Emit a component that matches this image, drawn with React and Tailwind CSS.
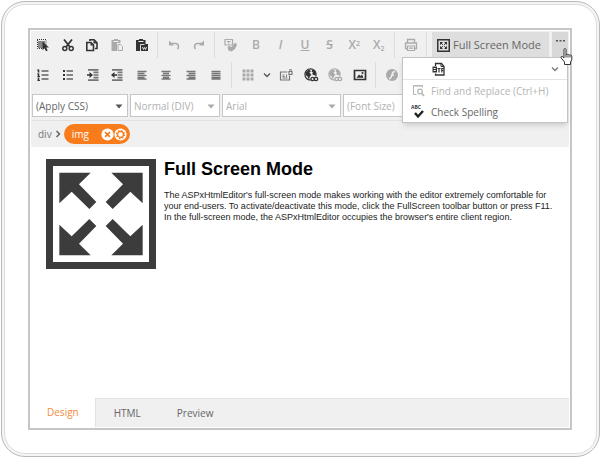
import clsx from 'clsx';

const Icon = ({ children, size = 'size-4', ...rest }) => (
  <svg viewBox="0 0 16 16" className={clsx('block shrink-0', size)} fill="currentColor" aria-hidden="true" {...rest}>
    {children}
  </svg>
);

const stroke = { fill: 'none', stroke: 'currentColor' };

const Arrows = () => (
  <>
    <path d="M40 41H134L99 76L151 129L130 150L77 98L40 133Z" />
    <path d="M290 41H196L231 76L179 129L200 150L253 98L290 133Z" />
    <path d="M40 289H134L99 254L151 201L130 180L77 232L40 197Z" />
    <path d="M290 289H196L231 254L179 201L200 180L253 232L290 197Z" />
  </>
);

const FullScreenGlyph = ({ className }) => (
  <svg viewBox="0 0 330 330" className={className} fill="currentColor" aria-hidden="true">
    <path fillRule="evenodd" d="M0 0H330V330H0ZM21 21V309H309V21Z" />
    <Arrows />
  </svg>
);

// toolbar version, heavier frame so it reads at 13px
const FullScreenIcon = () => (
  <svg viewBox="0 0 13 13" className="size-[13px] shrink-0 text-[#333]" fill="currentColor" aria-hidden="true">
    <path d="M.75.75h11.500v11.500H.75z" fill="none" stroke="currentColor" strokeWidth="1.500" />
    <path d="M3 3h3L3 6zM10 3v3L7 3zM3 10V7l3 3zM10 10H7l3-3z" />
    <path d="M3.500 3.500l2.300 2.300M9.500 3.500L7.200 5.800M3.500 9.500l2.300-2.300M9.500 9.500L7.200 7.200" stroke="currentColor" />
  </svg>
);

const Globe = () => (
  <>
    <circle cx="7.500" cy="7.500" r="5.600" {...stroke} strokeWidth="1.200" />
    <path d="M2.500 5.500L6 2.500l2 1.500-1.500 1.500L8.500 8l-1.500 1L6 12.500 4.500 9.500 2.500 8zM9.500 2.500l3 2 .5 3-1.500 1-2.500-1.500 1-1.500-1.500-1z" />
    <path d="M7.500 9.500H15V15H7.500z" fill="#f0f0f0" />
    <circle cx="9.600" cy="12" r="1.700" {...stroke} strokeWidth="1.300" />
    <circle cx="13" cy="12" r="1.700" {...stroke} strokeWidth="1.300" />
  </>
);

const textTool = 'text-[12px] leading-none font-semibold';

const icons = {
  select: (
    <Icon>
      <path d="M3 4h7v5l-2-1.500V11H3z" opacity=".55" />
      <path d="M2 2.500h9V9" {...stroke} strokeDasharray="1 1" />
      <path d="M2.500 3v8.500H8" {...stroke} strokeDasharray="1 1" />
      <path d="M7.500 4.500l6.500 6h-2.800l1.500 3-1.700.8-1.500-3-2 1.900z" />
    </Icon>
  ),
  cut: (
    <Icon>
      <circle cx="4.800" cy="11.500" r="2" {...stroke} strokeWidth="1.500" />
      <circle cx="11.200" cy="11.500" r="2" {...stroke} strokeWidth="1.500" />
      <path d="M4 2.500l6.200 7.700M12 2.500L5.800 10.200" {...stroke} strokeWidth="1.800" />
    </Icon>
  ),
  copy: (
    <Icon>
      <path d="M2.800 5.500h4.200l2.500 2.500v5.500H2.800z" {...stroke} strokeWidth="1.600" />
      <path d="M6 4V2.800h4l3 3v5.700h-2" {...stroke} strokeWidth="1.600" />
      <path d="M6.500 5.500l3 3h-3zM9.500 3l3.500 3.500H9.500z" />
    </Icon>
  ),
  paste: (
    <Icon>
      <path d="M2.500 3H5V2h4v1h2.500v3H8v8H2.500z" />
      <path d="M4.500 4.500h5" stroke="#f0f0f0" strokeWidth="1" />
      <path d="M9 7.500h2.500l2 2v4H9z" {...stroke} />
    </Icon>
  ),
  pasteWord: (
    <Icon>
      <path d="M2 3H5V2h4v1h2.500v4H14v7H2z" />
      <path d="M4.500 4.500h5" stroke="#f0f0f0" />
      <path d="M6.500 14V7.500h4M8.500 10l1 2.500 1-2 1 2 1-2.500" fill="none" stroke="#f0f0f0" strokeWidth=".9" />
    </Icon>
  ),
  undo: (
    <Icon>
      <path d="M4 6.500h5.500a3 3 0 0 1 3 3c0 1-.4 1.700-1 2.500" {...stroke} strokeWidth="1.500" />
      <path d="M3 3.500v5h5z" />
    </Icon>
  ),
  redo: (
    <Icon>
      <path d="M12 6.500H6.500a3 3 0 0 0-3 3c0 1 .4 1.700 1 2.500" {...stroke} strokeWidth="1.500" />
      <path d="M13 3.500v5H8z" />
    </Icon>
  ),
  clearFormat: (
    <Icon>
      <path d="M2 2.500h7.500v5.500H2z" {...stroke} strokeWidth="1.200" />
      <path d="M4 4.500h3.500M5.800 4.500V7" {...stroke} />
      <path d="M4.500 10l2-1 2 1L12 5.500l2 2-2 4.500-3.500 2.500-3-1z" />
    </Icon>
  ),
  bold: <span className={textTool}>B</span>,
  italic: <span className={clsx(textTool, 'italic')}>I</span>,
  underline: <span className={clsx(textTool, 'underline')}>U</span>,
  strike: <span className={clsx(textTool, 'line-through')}>S</span>,
  sup: <span className={textTool}>X<sup className="text-[7px]">2</sup></span>,
  sub: <span className={textTool}>X<sub className="text-[7px]">2</sub></span>,
  print: (
    <Icon>
      <path d="M4.500 6V2.500h7V6M4.500 11.500h-2V6h11v5.500h-2" {...stroke} strokeWidth="1.300" />
      <path d="M4.500 9h7v4.500h-7zM6 11.200h4" {...stroke} strokeWidth="1.200" />
    </Icon>
  ),
  ordered: (
    <Icon>
      <path d="M3.500 2.500v3M3.500 6.500v3M3.500 10.500v3" {...stroke} strokeWidth="1.600" />
      <path d="M2.500 3h1M2.500 9.500h2.500M2.500 13.500H5M2.500 6.700h1" {...stroke} />
      <path d="M6.500 4h7M6.500 8h7M6.500 12h7" {...stroke} strokeWidth="1.300" opacity=".75" />
    </Icon>
  ),
  bullets: (
    <Icon>
      <path d="M3 3h2v2H3zM3 7h2v2H3zM3 11h2v2H3z" />
      <path d="M6.500 4h6.500M6.500 8h6.500M6.500 12h6.500" {...stroke} strokeWidth="1.300" opacity=".75" />
    </Icon>
  ),
  indent: (
    <Icon>
      <path d="M3 2.800h10.500M8.500 5.400h5M8.500 8h5M8.500 10.600h5M3 13.200h10.500" {...stroke} strokeWidth="1.700" opacity=".65" />
      <path d="M2 7.200h2.500V5L8 8l-3.500 3V8.800H2z" />
    </Icon>
  ),
  outdent: (
    <Icon>
      <path d="M3 2.800h10.500M8.500 5.400h5M8.500 8h5M8.500 10.600h5M3 13.200h10.500" {...stroke} strokeWidth="1.700" opacity=".65" />
      <path d="M8 7.200H5.500V5L2 8l3.500 3V8.800H8z" />
    </Icon>
  ),
  left: <Icon><path d="M3.500 4.500h9M3.500 6.500h7M3.500 8.500h9M3.500 10.500h7M3.500 12h9" {...stroke} strokeWidth="1.500" /></Icon>,
  center: <Icon><path d="M3.500 4.500h9M5 6.500h6M3.500 8.500h9M5 10.500h6M3.500 12h9" {...stroke} strokeWidth="1.500" /></Icon>,
  right: <Icon><path d="M3.500 4.500h9M5.500 6.500h7M3.500 8.500h9M5.500 10.500h7M3.500 12h9" {...stroke} strokeWidth="1.500" /></Icon>,
  justify: <Icon><path d="M3.500 4.500h9M3.500 6.500h9M3.500 8.500h9M3.500 10.500h9M3.500 12h9" {...stroke} strokeWidth="1.700" /></Icon>,
  table: (
    <Icon>
      <path d="M2.500 2.500h3v3h-3zM6.500 2.500h3v3h-3zM10.500 2.500h3v3h-3zM2.500 6.500h3v3h-3zM6.500 6.500h3v3h-3zM10.500 6.500h3v3h-3zM2.500 10.500h3v3h-3zM6.500 10.500h3v3h-3zM10.500 10.500h3v3h-3z" />
    </Icon>
  ),
  chevron: <Icon><path d="M5 6.500l3 3 3-3" {...stroke} strokeWidth="1.300" /></Icon>,
  placeholder: (
    <Icon>
      <path d="M9.500 5h-7v8h9V8.500" {...stroke} strokeWidth="1.200" />
      <path d="M4.500 8h2M4.500 9.500h2M4.500 11h5M8.500 7.500v2.500" {...stroke} />
      <path d="M11 4.500h3v3h-3z" {...stroke} strokeWidth="1.200" />
      <path d="M11.700 4.500v-2h1.600v2" {...stroke} strokeWidth=".8" />
    </Icon>
  ),
  link: <Icon><Globe /></Icon>,
  image: (
    <Icon>
      <path d="M2.500 3.500h11v9h-11z" {...stroke} strokeWidth="1.700" />
      <path d="M4.500 10.800L7 7.500l1.500 1.500L10 7.500l1.500 3.300z" /><circle cx="10.500" cy="6" r="1" />
    </Icon>
  ),
  flash: (
    <Icon>
      <circle cx="8" cy="8" r="6" />
      <path d="M11 4.500c-2.500 0-2.800 1.500-3.200 3.500S7 11.500 5 11.800M7.500 8h2.500" fill="none" stroke="#f0f0f0" strokeWidth="1.300" />
    </Icon>
  ),
  rtf: (
    <Icon>
      <path d="M4.500 5V2.500h6l2.500 3V14H4.500v-1.500" {...stroke} strokeWidth="1.300" />
      <path d="M10 2.500v3h3" {...stroke} />
      <path d="M1.500 5.500h4.500v6H1.500z" /><path d="M2.700 7.500h2M2.700 9.500h2" stroke="#fff" />
      <path d="M6.500 7.500h3M8 7.500v4M10.800 11.500v-4H13M10.800 9.500h1.700" {...stroke} strokeWidth="1.200" />
    </Icon>
  ),
  find: (
    <Icon>
      <path d="M5.500 11.500H2.500v-9h9v2M2.500 3h9" {...stroke} />
      <circle cx="9" cy="8.500" r="2.300" {...stroke} strokeWidth="1.200" />
      <path d="M10.500 10l2.500 3" {...stroke} strokeWidth="1.700" />
    </Icon>
  ),
};

const tools = {
  row1: [
    [['select', 'Select All'], ['cut', 'Cut'], ['copy', 'Copy'], ['paste', 'Paste', 1], ['pasteWord', 'Paste from Word']],
    [['undo', 'Undo', 1], ['redo', 'Redo', 1]],
    [
      ['clearFormat', 'Remove Format', 1],
      ['bold', 'Bold', 1],
      ['italic', 'Italic', 1],
      ['underline', 'Underline', 1],
      ['strike', 'Strikethrough', 1],
      ['sup', 'Superscript', 1],
      ['sub', 'Subscript', 1],
    ],
    [['print', 'Print', 1]],
  ],
  row2: [
    [
      ['ordered', 'Ordered List'],
      ['bullets', 'Bullet List'],
      ['indent', 'Indent'],
      ['outdent', 'Outdent'],
      ['left', 'Align Left', 2],
      ['center', 'Align Center', 2],
      ['right', 'Align Right', 2],
      ['justify', 'Justify', 2],
    ],
  ],
};

const tones = ['text-[#333]', 'text-[#aaa]', 'text-[#777]'];

const ToolButton = ({ item: [name, label, tone = 0] }) => (
  <button
    type="button"
    title={label}
    aria-label={label}
    className={clsx('flex min-w-0 flex-1 items-center justify-center', tones[tone])}
  >
    {icons[name]}
  </button>
);

const Group = ({ items, width }) => (
  <div className={clsx('flex shrink-0', width)}>
    {items.map((it) => <ToolButton key={it[1]} item={it} />)}
  </div>
);

const Separator = () => <div className="mr-1 ml-[3px] w-px shrink-0 bg-[#dcdcdc]" />;

const Combo = ({ label, value, width, muted }) => (
  <div className={clsx('relative h-[23px] border border-[#c6c6c6] bg-white', width)}>
    <select
      aria-label={label}
      defaultValue={value}
      disabled={muted}
      className={clsx(
        'block h-[21px] w-full appearance-none py-0 pl-[3px] text-[10px] leading-[20px] disabled:opacity-100',
        muted ? 'text-[#b0b0b0]' : 'text-[#666]'
      )}
    >
      <option>{value}</option>
    </select>
    <svg viewBox="0 0 8 5" className={clsx('pointer-events-none absolute top-[9px] right-1 h-[5px] w-2', muted ? 'text-[#aaa]' : 'text-[#555]')}>
      <path d="M0.500 0.500h7L4 4.500z" fill="currentColor" />
    </svg>
  </div>
);

const HandCursor = () => (
  <svg viewBox="0 0 14 18" className="pointer-events-none absolute top-4 left-2 z-20 h-[18px] w-3.5" aria-hidden="true">
    <path
      d="M4 1.500c0-1.300 2-1.300 2 0V7c0-1 1.900-1 1.900.2 0-1 1.900-.9 1.900.4 0-.9 2-.8 2 .5v3.600L10.500 14v2.500h-6V14L1.200 10c-.8-1.200.6-2.200 1.600-1.200L4 10z"
      fill="#fff"
      stroke="#333"
    />
    <path d="M6 7v2.500M8 7.500v2M10 8v1.500" stroke="#333" />
  </svg>
);

const MoreMenu = () => (
  <div className="absolute top-[25px] right-0 z-10 w-[166px] border border-[#c4c4c4] bg-white text-[10px] shadow-md">
    <div className="flex h-[22px] items-center justify-between border-b border-[#e4e4e4] pr-1 pl-7 text-[#333]">
      <button type="button" aria-label="Export to RTF">{icons.rtf}</button>
      <button type="button" aria-label="More export formats" className="text-[#777]">{icons.chevron}</button>
    </div>
    <button type="button" className="flex h-[22px] w-full items-center gap-1 pl-2 whitespace-nowrap text-[#b4b4b4]">
      {icons.find}
      Find and Replace (Ctrl+H)
    </button>
    <button type="button" className="flex h-5 w-full items-center gap-1 pl-2 whitespace-nowrap text-[#666]">
      <svg viewBox="0 0 16 16" className="size-4 shrink-0" aria-hidden="true">
        <text x="0" y="5" fontSize="5" fontWeight="700" fill="#333">ABC</text>
        <path d="M4 9l3 3.500 5-5.500" fill="none" stroke="#222" strokeWidth="2.400" />
      </svg>
      Check Spelling
    </button>
  </div>
);

const Toolbar = () => (
  <div className="border-b border-[#e2e2e2] pt-px pr-px pb-[3px]">
    <div className="flex h-[26px]">
      <Group items={tools.row1[0]} width="w-[123px]" />
      <Separator />
      <Group items={tools.row1[1]} width="w-[49px]" />
      <Separator />
      <Group items={tools.row1[2]} width="w-[172px]" />
      <Separator />
      <Group items={tools.row1[3]} width="w-6" />
      <Separator />
      <div className="relative ml-auto flex gap-[3px]">
        <button
          type="button"
          className="flex w-[117px] items-center gap-[3px] bg-[#dedede] pl-[5px] text-[11px] whitespace-nowrap text-[#666]"
        >
          <FullScreenIcon />
          Full Screen Mode
        </button>
        <button type="button" aria-label="More" aria-expanded="true" className="relative flex w-4 justify-center bg-[#d8d8d8] pt-2 text-[#555]">
          <svg viewBox="0 0 9 2" className="h-0.5 w-[9px]" fill="currentColor">
            <path d="M0 0h2v1.500H0zM3.500 0h2v1.500h-2zM7 0h2v1.500H7z" />
          </svg>
          <HandCursor />
        </button>
        <MoreMenu />
      </div>
    </div>
    <div className="mt-1 flex h-[26px]">
      <Group items={tools.row2[0]} width="w-[197px]" />
      <Separator />
      <Group items={[['table', 'Insert Table', 1]]} width="w-6" />
      <button type="button" aria-label="Table options" className="flex w-[14px] items-center justify-center text-[#555]">{icons.chevron}</button>
      <Group
        items={[['placeholder', 'Placeholder', 2], ['link', 'Insert Link'], ['link', 'Unlink', 1], ['image', 'Insert Image']]}
        width="w-[98px]"
      />
      <Separator />
      <Group items={[['flash', 'Insert Flash', 1]]} width="w-6" />
    </div>
    <div className="mt-[6px] flex gap-0.5 pl-px">
      <Combo label="CSS class" value="(Apply CSS)" width="w-24" />
      <Combo label="Paragraph" value="Normal (DIV)" width="w-[90px]" muted />
      <Combo label="Font" value="Arial" width="w-[119px]" muted />
      <Combo label="Font size" value="(Font Size)" width="flex-1" muted />
    </div>
  </div>
);

const TagInspector = () => (
  <nav aria-label="Tag path" className="flex h-[26px] items-center pl-[7px] text-[10px] text-[#777]">
    <a href="#div">div</a>
    <svg viewBox="0 0 6 8" className="mx-[3px] h-2 w-[6px]" fill="none" stroke="#666" strokeWidth="1.500">
      <path d="M1.500 1l3 3-3 3" />
    </svg>
    <div className="flex h-5 w-[66px] items-center rounded-full bg-[#f97c1c] pr-[3px] pl-2 text-white">
      <a href="#img" className="mr-auto">img</a>
      <button type="button" aria-label="Remove element">
        <Icon size="size-[13px]">
          <circle cx="8" cy="8" r="7.500" />
          <path d="M5 5l6 6M11 5l-6 6" stroke="#f97c1c" strokeWidth="2" />
        </Icon>
      </button>
      <button type="button" aria-label="Element properties">
        <Icon size="size-[13px]">
          <circle cx="8" cy="8" r="7.500" />
          <circle cx="8" cy="8" r="3.700" fill="none" stroke="#f97c1c" strokeWidth="1.600" />
          <circle cx="8" cy="8" r="5" fill="none" stroke="#f97c1c" strokeWidth="1.400" strokeDasharray="1.960 1.960" />
        </Icon>
      </button>
    </div>
  </nav>
);

const tabs = ['Design', 'HTML', 'Preview'];

export default function App() {
  return (
    <div className="flex min-h-screen flex-col bg-white pt-px pr-[10px] pb-[18px] pl-px font-['Open_Sans','Noto_Sans',sans-serif]">
      <div className="flex flex-1 flex-col rounded-[24px] border border-[#b8b8b8] bg-[#f5f5f5] p-0.5">
        <div className="flex flex-1 flex-col rounded-[21px] border border-[#dcdcdc] bg-white pt-[23px] pr-6 pb-[23px] pl-[23px]">
          <div className="flex flex-1 flex-col border-2 border-[#c6c6c6] bg-white p-px">
            <header className="bg-[#f0f0f0]">
              <Toolbar />
              <TagInspector />
            </header>
            <main className="flex flex-1 items-start gap-2 pt-3 pr-3 pl-[15px] font-['Liberation_Sans',Arial,sans-serif] text-black">
              <FullScreenGlyph className="size-[110px] shrink-0 text-[#3c3c3c]" />
              <div>
                <h1 className="text-lg leading-5 font-bold">Full Screen Mode</h1>
                <p className="mt-[11px] text-[9px] leading-[11px] text-[#222]">
                  The ASPxHtmlEditor's full-screen mode makes working with the editor extremely comfortable for your end-users. To
                  activate/deactivate this mode, click the FullScreen toolbar button or press F11.
                  <br />
                  In the full-screen mode, the ASPxHtmlEditor occupies the browser's entire client region.
                </p>
              </div>
            </main>
            <div role="tablist" className="flex bg-[#f0f0f0] text-[10px]">
              {tabs.map((tab, i) => (
                <button
                  key={tab}
                  type="button"
                  role="tab"
                  aria-selected={i === 0}
                  className={clsx(
                    'h-[29px]',
                    i === 0
                      ? 'border-r border-[#e2e2e2] bg-white px-4 text-[#f58a3c]'
                      : 'border-t border-[#e2e2e2] px-[18px] text-[#666]'
                  )}
                >
                  {tab}
                </button>
              ))}
              <div className="flex-1 border-t border-[#e2e2e2]" />
            </div>
          </div>
        </div>
      </div>
    </div>
  );
}
